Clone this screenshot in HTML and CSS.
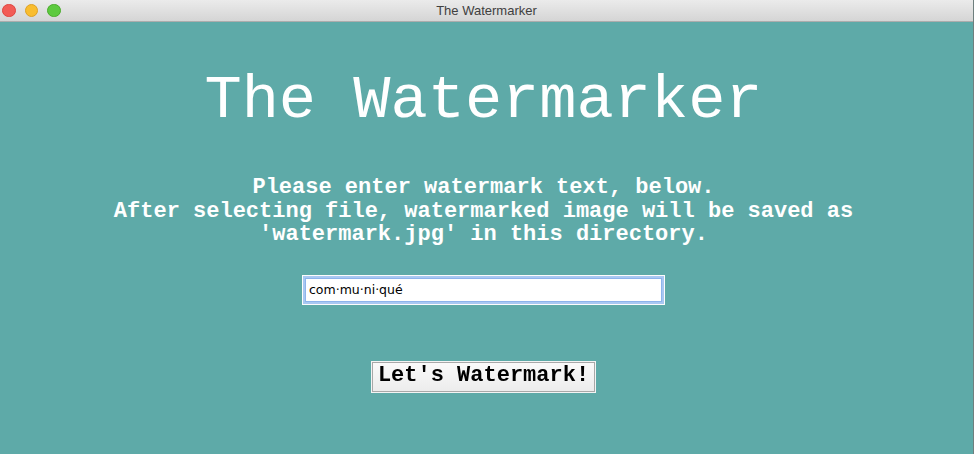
FILE: index.html
```html
<!DOCTYPE html>
<html>
<head>
<meta charset="utf-8">
<title>The Watermarker</title>
<link rel="stylesheet" href="styles.css">
</head>
<body>
<div class="window">
  <div class="titlebar">
    <div class="lights">
      <span class="light red"></span>
      <span class="light yellow"></span>
      <span class="light green"></span>
    </div>
    <div class="wintitle">The Watermarker</div>
  </div>
  <main class="content">
    <h1 class="heading">The Watermarker</h1>
    <p class="intro">Please enter watermark text, below.<br>After selecting file, watermarked image will be saved as<br>'watermark.jpg' in this directory.</p>
    <div class="field"><input class="textin" type="text" value="com·mu·ni·qué" autofocus></div>
    <button class="btn" type="button">Let's Watermark!</button>
  </main>
</div>
</body>
</html>
```
FILE: styles.css
```css
html, body {
  margin: 0;
  padding: 0;
  height: 100%;
}
body {
  background: #5eaaa8;
  overflow: hidden;
}
.window {
  height: 454px;
  display: flex;
  flex-direction: column;
  border-right: 1px solid #6f7f7e;
  box-sizing: border-box;
}
.titlebar {
  height: 21px;
  flex: none;
  display: flex;
  align-items: center;
  background: linear-gradient(#ebebeb, #d5d5d5);
  border-bottom: 1px solid #acacac;
  position: relative;
}
.lights {
  display: flex;
  gap: 9px;
  padding-left: 2px;
  position: relative;
  z-index: 1;
}
.light {
  width: 13.5px;
  height: 13.5px;
  box-sizing: border-box;
  border-radius: 50%;
  display: block;
}
.red { background: #f25c56; border: 0.5px solid #e0443e; }
.yellow { background: #f9bd2f; border: 0.5px solid #dea123; }
.green { background: #5dca3f; border: 0.5px solid #4aac2b; }
.wintitle {
  position: absolute;
  left: 0;
  right: 0;
  top: 0;
  line-height: 21px;
  text-align: center;
  font-family: "Liberation Sans", Arial, sans-serif;
  font-size: 13px;
  color: #404040;
}
.content {
  flex: 1;
  display: flex;
  flex-direction: column;
  align-items: center;
  padding: 44px 6px 0 0;
  color: #fff;
}
.heading {
  margin: 0;
  font-family: "Liberation Mono", "Courier New", monospace;
  font-weight: normal;
  font-size: 62px;
  line-height: 70px;
  color: #fff;
}
.intro {
  margin: 40px 0 0 0;
  font-family: "Liberation Mono", "Courier New", monospace;
  font-weight: bold;
  font-size: 22px;
  line-height: 23.5px;
  text-align: center;
  color: #fff;
}
.field {
  margin-top: 28px;
  width: 363px;
  height: 30px;
  box-sizing: border-box;
  border: 1px solid #fdfdfd;
  background: #fff;
  display: flex;
}
.textin {
  flex: 1;
  margin: 0;
  border: 2px solid #a9c8f2;
  box-shadow: inset 0 0 0 1px #c9dcf7;
  outline: 1px solid #8db4ec;
  outline-offset: -3px;
  padding: 0 0 0 4px;
  font-family: "DejaVu Sans", sans-serif;
  font-size: 12.5px;
  color: #000;
  background: #fff;
  caret-color: #000;
}
.btn {
  margin-top: 57px;
  width: 223px;
  height: 30px;
  box-sizing: border-box;
  border: 1px solid #a8a8a8;
  box-shadow: 0 0 0 1px #f4f4f4;
  background: linear-gradient(#fafafa, #ececec);
  padding: 0 0 2px 0;
  font-family: "Liberation Mono", "Courier New", monospace;
  font-weight: bold;
  font-size: 22px;
  color: #000;
  text-align: center;
}
```
